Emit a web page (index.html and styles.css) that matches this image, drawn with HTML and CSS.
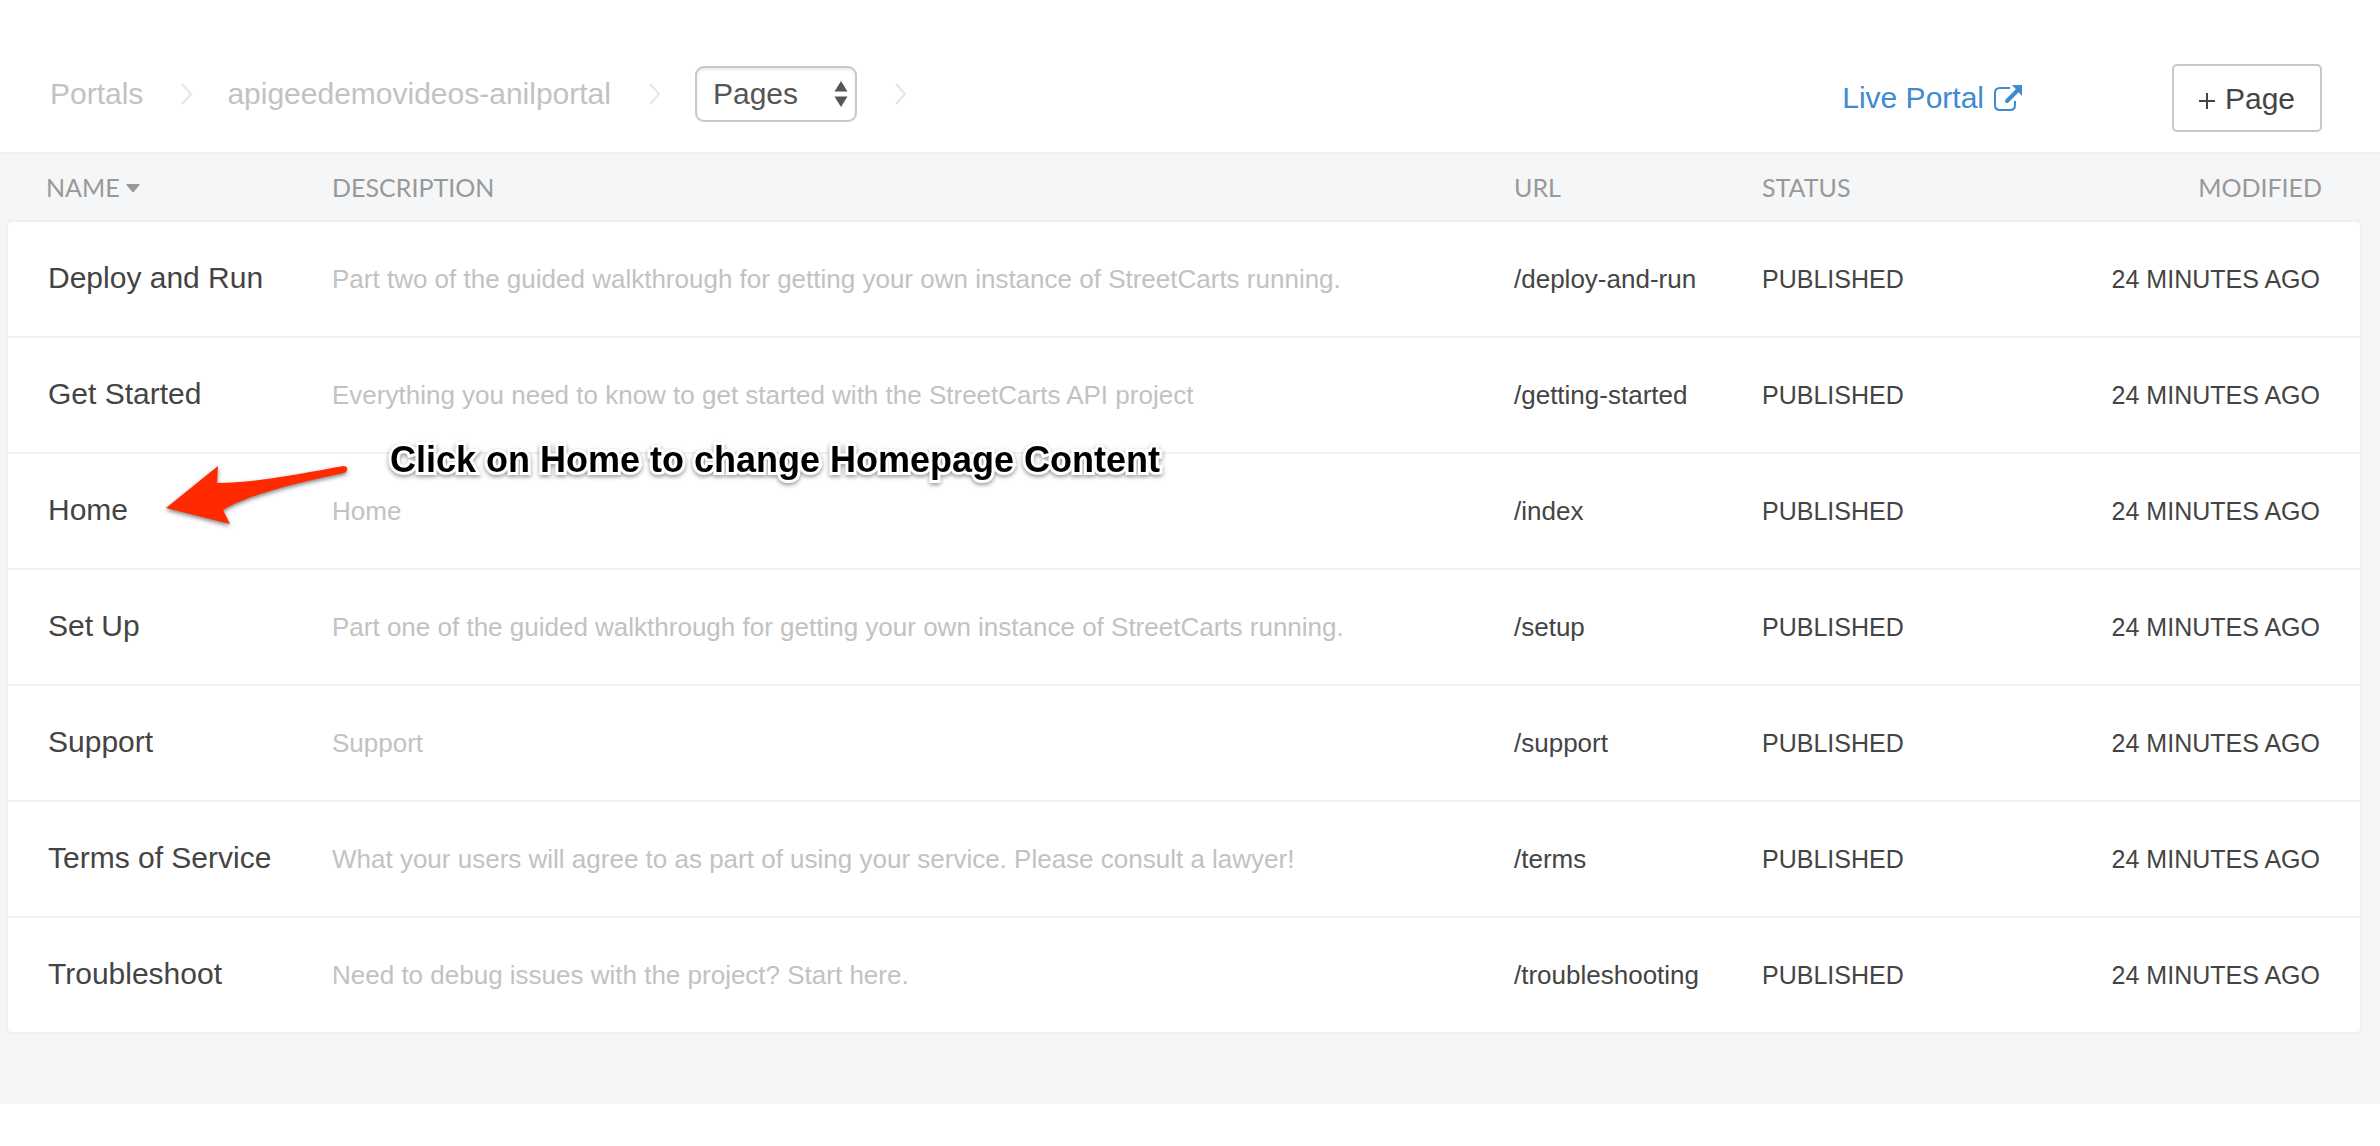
FILE: index.html
```html
<!DOCTYPE html>
<html lang="en">
<head>
<meta charset="utf-8">
<title>Pages</title>
<link rel="stylesheet" href="styles.css">
</head>
<body>
<header class="topbar">
  <nav class="crumbs" aria-label="Breadcrumb">
    <a class="crumb" href="#portals">Portals</a>
    <svg class="chevron" viewBox="0 0 12 22" aria-hidden="true"><path d="M1 1l9 10-9 10"/></svg>
    <a class="crumb" href="#portal">apigeedemovideos-anilportal</a>
    <svg class="chevron" viewBox="0 0 12 22" aria-hidden="true"><path d="M1 1l9 10-9 10"/></svg>
    <span class="picker">
      <select class="picker-select" aria-label="Section"><option>Pages</option></select>
      <svg class="picker-arrows" viewBox="0 0 14 26" aria-hidden="true"><path d="M7 0l6.500 10.500H.5zM7 26L.5 15.500h13z"/></svg>
    </span>
    <svg class="chevron" viewBox="0 0 12 22" aria-hidden="true"><path d="M1 1l9 10-9 10"/></svg>
  </nav>
  <div class="actions">
    <a class="live" href="#live">Live Portal
      <svg class="live-icon" viewBox="0 0 28 26" aria-hidden="true"><path class="live-frame" d="M16 3H6Q1 3 1 8v12q0 5 5 5h10q5 0 5-5v-4"/><path class="live-shaft" d="M13 16L24 5"/><path class="live-head" d="M18 0h10v11z"/></svg></a>
    <button class="add" type="button"><svg class="add-plus" viewBox="0 0 16 16" aria-hidden="true"><path d="M8 0v16M0 8h16"/></svg>Page</button>
  </div>
</header>
<main class="content">
  <table class="pages">
    <colgroup><col class="col-name"><col><col class="col-url"><col class="col-status"><col class="col-modified"></colgroup>
    <thead>
      <tr><th scope="col" aria-sort="ascending">NAME<svg class="sort" viewBox="0 0 14 8" aria-hidden="true"><path d="M1 0h12q1 0 .5 1L8 7.500q-1 1-2 0L.5 1Q0 0 1 0z"/></svg></th><th scope="col">DESCRIPTION</th><th scope="col">URL</th><th scope="col">STATUS</th><th scope="col">MODIFIED</th></tr>
    </thead>
    <tbody>
      <tr><td><a class="name" href="#deploy">Deploy and Run</a></td><td class="desc">Part two of the guided walkthrough for getting your own instance of StreetCarts running.</td><td class="url">/deploy-and-run</td><td>PUBLISHED</td><td>24 MINUTES AGO</td></tr>
      <tr><td><a class="name" href="#start">Get Started</a></td><td class="desc">Everything you need to know to get started with the StreetCarts API project</td><td class="url">/getting-started</td><td>PUBLISHED</td><td>24 MINUTES AGO</td></tr>
      <tr><td><a class="name" href="#home">Home</a></td><td class="desc">Home</td><td class="url">/index</td><td>PUBLISHED</td><td>24 MINUTES AGO</td></tr>
      <tr><td><a class="name" href="#setup">Set Up</a></td><td class="desc">Part one of the guided walkthrough for getting your own instance of StreetCarts running.</td><td class="url">/setup</td><td>PUBLISHED</td><td>24 MINUTES AGO</td></tr>
      <tr><td><a class="name" href="#support">Support</a></td><td class="desc">Support</td><td class="url">/support</td><td>PUBLISHED</td><td>24 MINUTES AGO</td></tr>
      <tr><td><a class="name" href="#terms">Terms of Service</a></td><td class="desc">What your users will agree to as part of using your service. Please consult a lawyer!</td><td class="url">/terms</td><td>PUBLISHED</td><td>24 MINUTES AGO</td></tr>
      <tr><td><a class="name" href="#troubleshoot">Troubleshoot</a></td><td class="desc">Need to debug issues with the project? Start here.</td><td class="url">/troubleshooting</td><td>PUBLISHED</td><td>24 MINUTES AGO</td></tr>
    </tbody>
  </table>
  <svg class="callout-arrow" viewBox="0 0 184 62" aria-hidden="true"><path d="M0 42L52 0L51 17C92 17 142 6 178 0Q182 1 181 4Q181 6 178 7C130 17 84 28 57 44L64 58Z"/></svg>
  <p class="callout">Click on Home to change Homepage Content</p>
</main>
</body>
</html>
```
FILE: styles.css
```css
* {
  box-sizing: border-box;
}

body {
  margin: 0;
  background: #fff;
  color: #444;
  font-family: "Liberation Sans", Arial, sans-serif;
  font-size: 25px;
  line-height: 32px;
}

a {
  color: inherit;
  text-decoration: none;
}

/* Top bar */
.topbar {
  display: flex;
  justify-content: space-between;
  align-items: flex-start;
  padding: 64px 58px 20px 50px;
  font-size: 30px;
}

.crumbs {
  display: flex;
  align-items: center;
  gap: 34px;
  padding-top: 2px;
}

.crumb {
  color: #c2c2c2;
}

.chevron {
  width: 12px;
  height: 22px;
  margin-left: 4px;
  fill: none;
  stroke: #e6e6e6;
  stroke-width: 2;
}

.picker {
  position: relative;
  display: flex;
}

.picker-select {
  appearance: none;
  width: 162px;
  height: 56px;
  padding: 0 16px;
  border: 2px solid #c8c8c8;
  border-radius: 9px;
  background: #fff;
  box-shadow: inset 0 2px 3px rgba(0, 0, 0, 0.08);
  color: #555;
  font: inherit;
}

.picker-arrows {
  position: absolute;
  top: 15px;
  right: 9px;
  width: 14px;
  height: 26px;
  fill: #555;
  pointer-events: none;
}

.actions {
  display: flex;
  align-items: center;
  gap: 150px;
}

.live {
  display: flex;
  align-items: center;
  gap: 10px;
  color: #3d8bd0;
}

.live-icon {
  width: 28px;
  height: 26px;
}

.live-frame,
.live-shaft {
  fill: none;
  stroke: #3d8bd0;
  stroke-width: 2;
}

.live-shaft {
  stroke-width: 4;
  stroke-linecap: round;
}

.live-head {
  fill: #3d8bd0;
}

.add {
  display: flex;
  justify-content: center;
  align-items: center;
  gap: 10px;
  width: 150px;
  height: 68px;
  padding: 2px 0 0;
  border: 2px solid #c8c8c8;
  border-radius: 5px;
  background: #fff;
  color: #444;
  font: inherit;
}

.add-plus {
  width: 16px;
  height: 16px;
  margin-top: 4px;
  fill: none;
  stroke: #444;
  stroke-width: 2;
}

/* Page list */
.content {
  position: relative;
  padding: 0 18px 70px 6px;
  border-top: 2px solid #eef0f2;
  background: #f4f6f8;
}

.pages {
  width: 100%;
  table-layout: fixed;
  border-spacing: 0;
}

.col-name {
  width: 326px;
}

.col-url,
.col-status {
  width: 248px;
}

.col-modified {
  width: 352px;
}

th,
td {
  padding: 0;
  text-align: left;
  white-space: nowrap;
}

th {
  height: 68px;
  border-bottom: 2px solid #eef0f2;
  color: #999;
  font-family: Lato, sans-serif;
  font-weight: 400;
}

td {
  height: 116px;
  padding-top: 40px;
  border-bottom: 2px solid #f0f1f2;
  background: #fff;
  vertical-align: baseline;
}

th:first-child,
td:first-child {
  padding-left: 40px;
}

th:last-child,
td:last-child {
  padding-right: 40px;
  text-align: right;
}

td:first-child {
  border-left: 2px solid #f0f1f2;
}

td:last-child {
  border-right: 2px solid #f0f1f2;
}

tr:first-child td:first-child {
  border-top-left-radius: 6px;
}

tr:first-child td:last-child {
  border-top-right-radius: 6px;
}

tr:last-child td:first-child {
  border-bottom-left-radius: 6px;
}

tr:last-child td:last-child {
  border-bottom-right-radius: 6px;
}

.sort {
  width: 14px;
  height: 8px;
  margin-left: 6px;
  vertical-align: 5px;
  fill: #999;
}

.name {
  font-size: 30px;
}

.desc,
.url {
  font-size: 26px;
}

.desc {
  color: #c2c2c2;
}

/* Callout drawn over the list */
.callout-arrow {
  position: absolute;
  top: 312px;
  left: 166px;
  width: 184px;
  height: 62px;
  overflow: visible;
  fill: #ff2a00;
  filter: drop-shadow(0 2px 2px rgba(0, 0, 0, 0.5));
}

.callout {
  position: absolute;
  top: 286px;
  left: 390px;
  margin: 0;
  color: #000;
  font-size: 36px;
  font-weight: 700;
  line-height: 40px;
  white-space: nowrap;
  paint-order: stroke fill;
  -webkit-text-stroke: 6px #fff;
  filter: drop-shadow(0 2px 2px rgba(0, 0, 0, 0.4));
}
```
